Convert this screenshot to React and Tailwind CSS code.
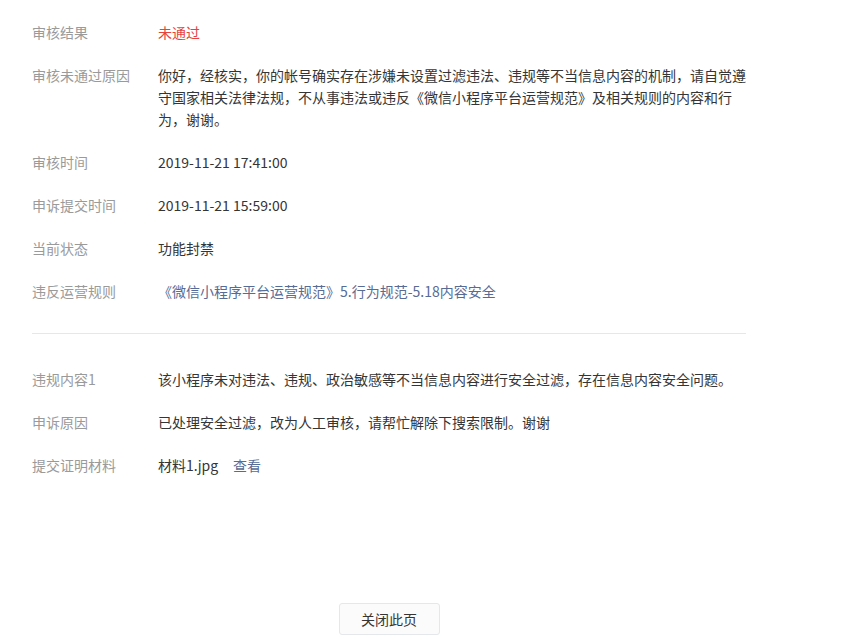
const font = { fontFamily: '"Noto Sans CJK SC", "Noto Sans", sans-serif' };

function Row({ label, children }) {
    return (
        <div className="flex text-[14px] leading-[22px]">
            <div className="w-[126px] shrink-0 text-[#9a9a9a]">{label}</div>
            <div className="w-[588px] text-[#353535]">{children}</div>
        </div>
    );
}

export default function App() {
    return (
        <div className="bg-white min-h-[641px] w-[864px]" style={font}>
            <div className="pl-[32px] pt-[21px] w-[746px]">
                <div className="flex flex-col gap-[21px]">
                    <Row label="审核结果"><span className="text-[#e64340]">未通过</span></Row>
                    <Row label="审核未通过原因">
                        你好，经核实，你的帐号确实存在涉嫌未设置过滤违法、违规等不当信息内容的机制，请自觉遵守国家相关法律法规，不从事违法或违反《微信小程序平台运营规范》及相关规则的内容和行为，谢谢。
                    </Row>
                    <Row label="审核时间">2019-11-21 17:41:00</Row>
                    <Row label="申诉提交时间">2019-11-21 15:59:00</Row>
                    <Row label="当前状态">功能封禁</Row>
                    <Row label="违反运营规则">
                        <a className="text-[#576b95]">《微信小程序平台运营规范》5.行为规范-5.18内容安全</a>
                    </Row>
                </div>
                <div className="h-px bg-[#e7e7eb] mt-[31px] mb-[34px]"></div>
                <div className="flex flex-col gap-[21px]">
                    <Row label="违规内容1">该小程序未对违法、违规、政治敏感等不当信息内容进行安全过滤，存在信息内容安全问题。</Row>
                    <Row label="申诉原因">已处理安全过滤，改为人工审核，请帮忙解除下搜索限制。谢谢</Row>
                    <Row label="提交证明材料">
                        <span>材料1.jpg</span>
                        <a className="ml-[15px] text-[#576b95]">查看</a>
                    </Row>
                </div>
                <div className="flex justify-center mt-[127px]">
                    <button className="w-[101px] h-[32px] border border-[#e4e8eb] bg-[#fbfbfb] rounded-[3px] text-[14px] text-[#353535]">
                        关闭此页
                    </button>
                </div>
            </div>
        </div>
    );
}
